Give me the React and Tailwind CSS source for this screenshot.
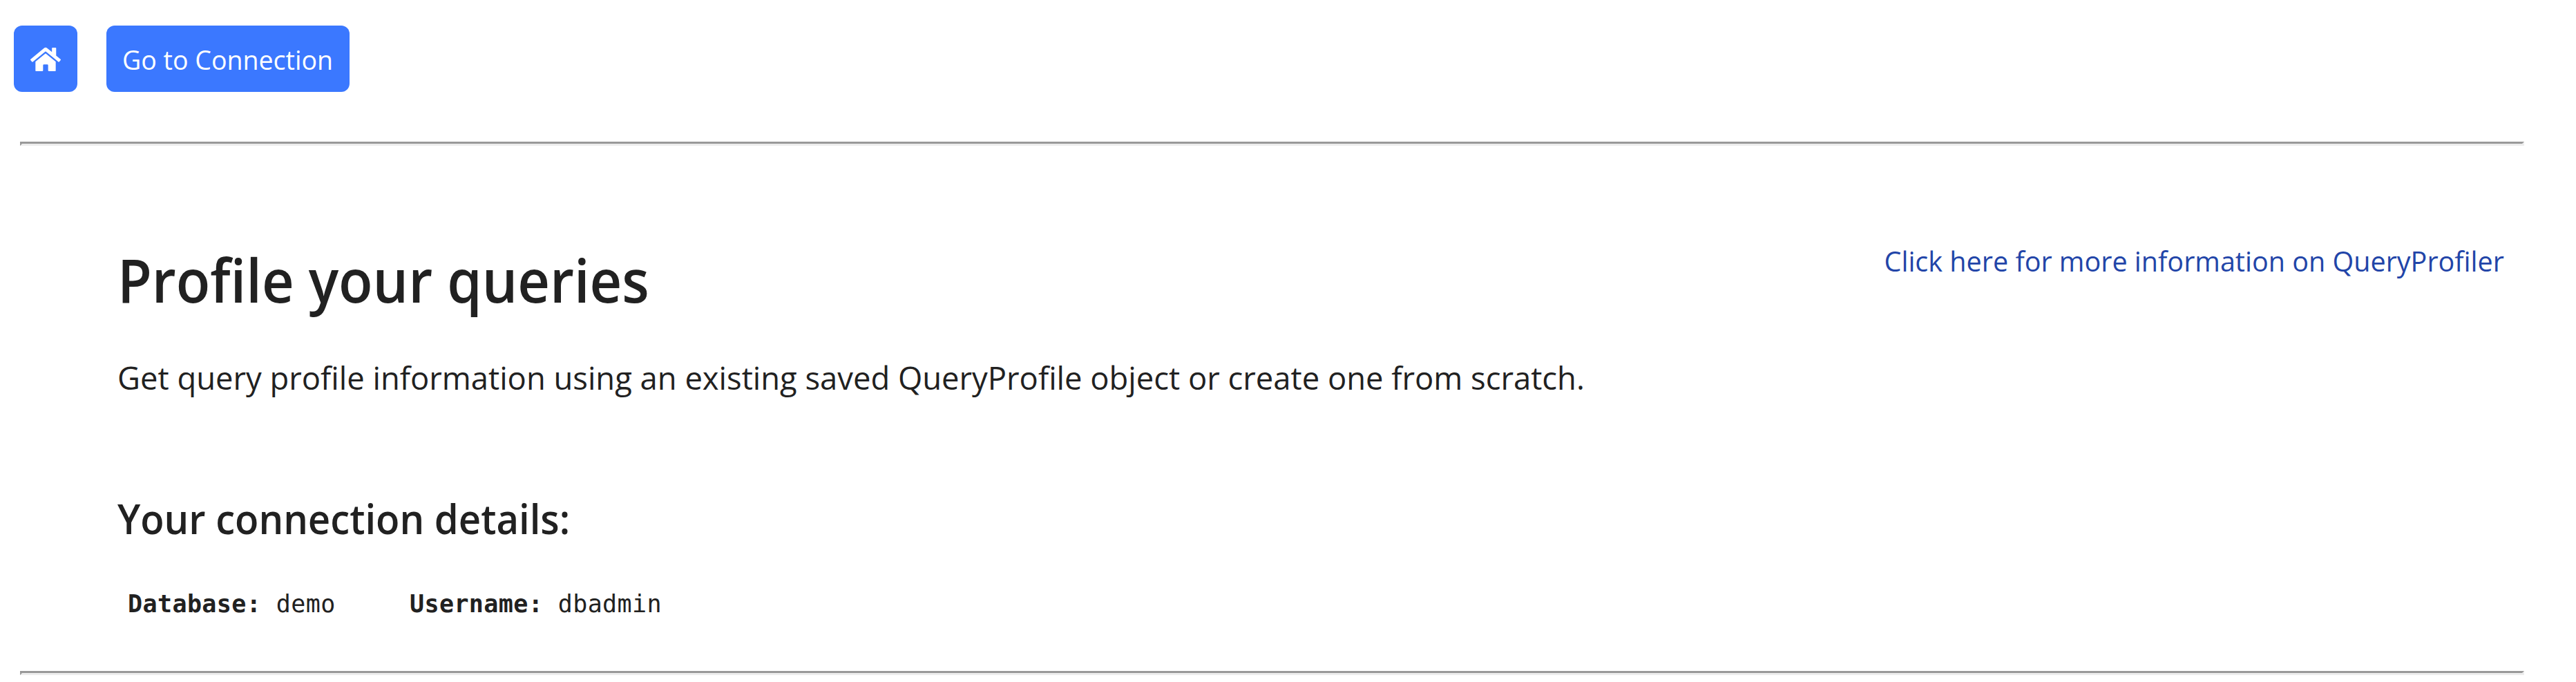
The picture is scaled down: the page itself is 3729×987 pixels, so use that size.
import React from "react";
import { FaHome } from "react-icons/fa";

function Rule() {
  return (
    <div className="ml-[29px] h-[6px] w-[3625px] border-[3px] border-t-[#999999] border-l-[#999999] border-r-[#ededed] border-b-[#ededed]" />
  );
}

export default function App() {
  return (
    <div className="flex h-[987px] w-[3729px] flex-col overflow-hidden bg-white pt-[37px] font-['Open_Sans','Noto_Sans',sans-serif] text-[#212121]">
      <nav className="flex h-[96px] gap-[42px] pl-[20px] text-white">
        <button className="flex w-[92px] items-center justify-center rounded-[12px] bg-[#3b78ff] pt-[2px]">
          <FaHome className="size-[44px]" />
        </button>
        <button className="flex w-[352px] rounded-[12px] bg-[#3b78ff] pl-[23px] text-[39px] leading-[98px] whitespace-nowrap">
          <span className="origin-left scale-x-[0.962]">Go to Connection</span>
        </button>
      </nav>
      <div className="mt-[72px]">
        <Rule />
      </div>
      <main className="flex h-[760px] justify-between pl-[170px] pr-[104px]">
        <section className="flex flex-col items-start whitespace-nowrap">
          <h1 className="mt-[134px] h-[120px] origin-left scale-x-[0.943] text-[86px] leading-[120px] font-semibold">
            Profile your queries
          </h1>
          <p className="mt-[46px] h-[70px] origin-left scale-x-[0.986] text-[46px] leading-[70px]">
            Get query profile information using an existing saved QueryProfile object or create one from scratch.
          </p>
          <h2 className="mt-[129px] h-[80px] origin-left scale-x-[0.953] text-[59px] leading-[80px] font-semibold">
            Your connection details:
          </h2>
          <pre className="mt-[57px] ml-[15px] h-[54px] font-['DejaVu_Sans_Mono',monospace] text-[35px] leading-[54px] tracking-[0.4px]">
            <b>Database:</b> demo{"     "}<b>Username:</b> dbadmin
          </pre>
        </section>
        <a className="mt-[136px] h-[60px] origin-right scale-x-[0.964] text-[41px] leading-[60px] whitespace-nowrap text-[#2245a8]">
          Click here for more information on QueryProfiler
        </a>
      </main>
      <Rule />
    </div>
  );
}
